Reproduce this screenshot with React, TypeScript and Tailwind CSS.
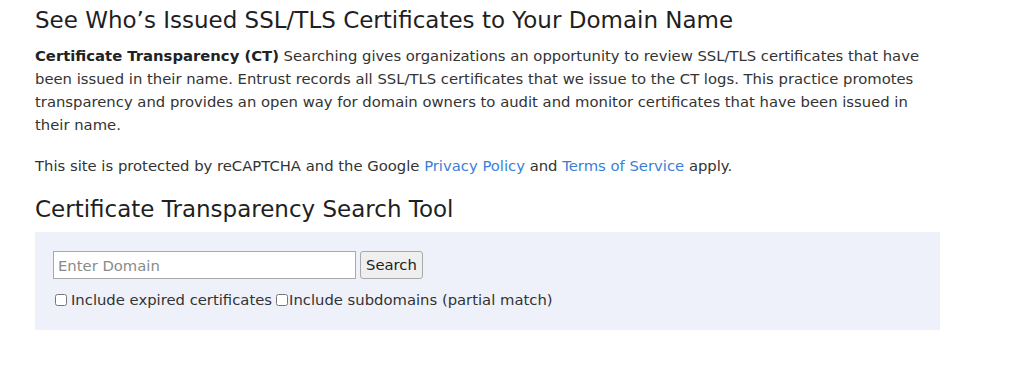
import React from 'react'

export default function App() {
  return (
    <div className="min-h-screen bg-white font-['DejaVu_Sans',sans-serif] text-[#333]">
      <div className="pl-[35px] pr-[82px] pt-[7px]">
        <h1 className="text-[23px] leading-[27px] font-medium text-[#1f1f1f]">
          See Who’s Issued SSL/TLS Certificates to Your Domain Name
        </h1>

        <p className="mt-[10px] text-[14.8px] leading-[23px]">
          <strong className="font-bold text-[#222]">Certificate Transparency (CT)</strong> Searching gives
          organizations an opportunity to review SSL/TLS certificates that have been issued in their name.
          Entrust records all SSL/TLS certificates that we issue to the CT logs. This practice promotes
          transparency and provides an open way for domain owners to audit and monitor certificates that have
          been issued in their name.
        </p>

        <p className="mt-[18px] text-[14.8px] leading-[23px]">
          This site is protected by reCAPTCHA and the Google{' '}
          <a href="#" className="text-[#3a7fd6]">Privacy Policy</a> and{' '}
          <a href="#" className="text-[#3a7fd6]">Terms of Service</a> apply.
        </p>

        <h2 className="mt-[19px] text-[23px] leading-[27px] font-medium text-[#1f1f1f]">
          Certificate Transparency Search Tool
        </h2>

        <div className="mt-[9px] w-[905px] h-[98px] bg-[#eef1fa] pl-[18px] pt-[19px]">
          <div className="flex items-center gap-[4px]">
            <input
              type="text"
              placeholder="Enter Domain"
              className="w-[303px] h-[28px] border border-[#a9a9a9] bg-white px-[4px] text-[14.8px] placeholder:text-[#8a8a8a] outline-none"
            />
            <button className="h-[28px] px-[5px] rounded-[3px] border border-[#a9a9a9] bg-[#efefef] text-[14.8px] text-[#222]">
              Search
            </button>
          </div>
          <div className="mt-[10px] flex items-center text-[14.8px]">
            <label className="flex items-center">
              <input type="checkbox" className="mr-[4px] ml-[2px] w-[12px] h-[12px]" />
              Include expired certificates
            </label>
            <label className="ml-[4px] flex items-center">
              <input type="checkbox" className="w-[12px] h-[12px] mr-[1px]" />
              Include subdomains (partial match)
            </label>
          </div>
        </div>
      </div>
    </div>
  )
}
